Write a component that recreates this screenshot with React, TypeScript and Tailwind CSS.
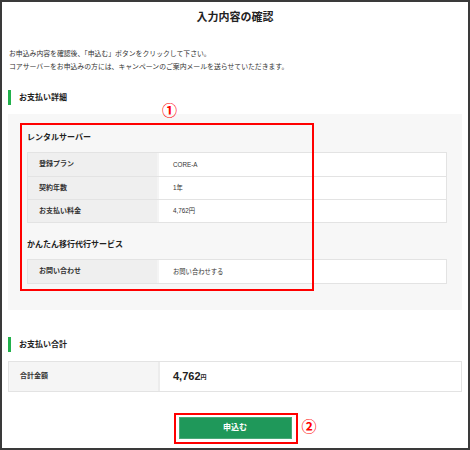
const font = 'font-["Liberation_Sans","Noto_Sans_CJK_JP",sans-serif]'

type Row = { label: string; value: string }

function InfoTable({ rows, labelW }: { rows: Row[]; labelW: string }) {
  return (
    <div className="border border-[#e3e3e3] bg-white">
      {rows.map((r, i) => (
        <div key={r.label} className={`flex h-[23px] ${i > 0 ? 'border-t border-[#e3e3e3]' : ''}`}>
          <div className={`${labelW} shrink-0 bg-[#efefef] border-r-2 border-[#f4f4f4] flex items-center pl-[11px] text-[7px] font-bold text-[#333]`}>
            {r.label}
          </div>
          <div className="flex-1 flex items-center pl-[14px] text-[6.3px] text-[#333]">{r.value}</div>
        </div>
      ))}
    </div>
  )
}

function SectionHeading({ children }: { children: string }) {
  return (
    <div className="flex items-center h-[15px] border-l-[3px] border-[#22b14c] pl-[8px] text-[8px] font-bold text-[#222] leading-none">
      {children}
    </div>
  )
}

export default function App() {
  return (
    <div className={`w-[470px] h-[450px] border-2 border-[#3a3a3a] bg-white overflow-hidden ${font}`}>
      {/* ── Title ── */}
      <h1 className="pt-[5px] text-center text-[11px] leading-[20px] font-bold text-[#222]">入力内容の確認</h1>

      <div className="px-[6px]">
        {/* Intro */}
        <div className="mt-[20px] pl-[1px] text-[6.85px] leading-[13px] text-[#333]">
          <p>お申込み内容を確認後、「申込む」ボタンをクリックして下さい。</p>
          <p>コアサーバーをお申込みの方には、キャンペーンのご案内メールを送らせていただきます。</p>
        </div>

        {/* ── Payment detail ── */}
        <div className="mt-[17px]">
          <SectionHeading>お支払い詳細</SectionHeading>
        </div>

        <div className="relative mt-[9px] bg-[#f7f7f7] pl-[19px] pr-[15px] pt-[18px] pb-[26px]">
          <h2 className="text-[8px] leading-[12px] font-bold text-[#222]">レンタルサーバー</h2>
          <div className="mt-[8px]">
            <InfoTable
              labelW="w-[131px]"
              rows={[
                { label: '登録プラン', value: 'CORE-A' },
                { label: '契約年数', value: '1年' },
                { label: 'お支払い料金', value: '4,762円' },
              ]}
            />
          </div>
          <h2 className="mt-[16px] text-[8px] leading-[12px] font-bold text-[#222]">かんたん移行代行サービス</h2>
          <div className="mt-[8px]">
            <InfoTable labelW="w-[131px]" rows={[{ label: 'お問い合わせ', value: 'お問い合わせする' }]} />
          </div>

          {/* annotation ① */}
          <div className="absolute left-[12px] top-[9px] w-[294px] h-[168px] border-2 border-[#ff0000]" />
          <span className="absolute left-[154px] top-[-12px] text-[15px] leading-[18px] font-bold text-[#ff0000]">①</span>
        </div>

        {/* ── Total ── */}
        <div className="mt-[27px]">
          <SectionHeading>お支払い合計</SectionHeading>
        </div>

        <div className="mt-[9px] flex h-[31px] border border-[#e3e3e3] bg-white">
          <div className="w-[151px] shrink-0 bg-[#f5f5f5] border-r-2 border-[#ececec] flex items-center pl-[11px] text-[7px] font-bold text-[#333]">
            合計金額
          </div>
          <div className="flex-1 flex items-center pl-[13px] text-[#222]">
            <span className="text-[11px] font-bold">4,762</span>
            <span className="text-[6px] font-bold mt-[2px]">円</span>
          </div>
        </div>

        {/* ── Submit ── */}
        <div className="mt-[25px] flex justify-center">
          <div className="relative">
            <button className="w-[113px] h-[22px] bg-[#1f985a] border border-[#4aa878] text-white text-[8px] font-bold flex items-center justify-center">
              申込む
            </button>
            <div className="absolute -left-[5px] -top-[4px] w-[124px] h-[31px] border-2 border-[#ff0000]" />
            <span className="absolute left-[123px] top-[1px] text-[15px] leading-[18px] font-bold text-[#ff0000]">②</span>
          </div>
        </div>
      </div>
    </div>
  )
}
